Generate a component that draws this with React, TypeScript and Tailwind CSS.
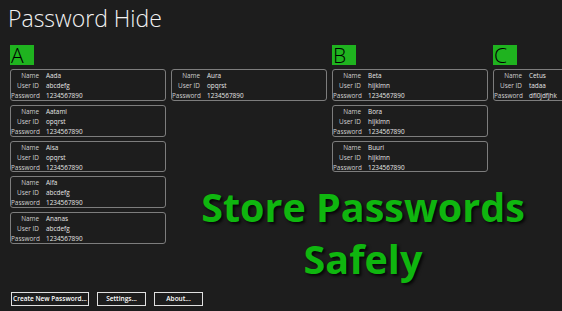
import React from 'react'

type Entry = { name: string; id: string; pw: string }

const groups: { letter: string; columns: Entry[][] }[] = [
  {
    letter: 'A',
    columns: [
      [
        { name: 'Aada', id: 'abcdefg', pw: '1234567890' },
        { name: 'Aatami', id: 'opqrst', pw: '1234567890' },
        { name: 'Aisa', id: 'opqrst', pw: '1234567890' },
        { name: 'Alfa', id: 'abcdefg', pw: '1234567890' },
        { name: 'Ananas', id: 'abcdefg', pw: '1234567890' },
      ],
      [{ name: 'Aura', id: 'opqrst', pw: '1234567890' }],
    ],
  },
  {
    letter: 'B',
    columns: [
      [
        { name: 'Beta', id: 'hijklmn', pw: '1234567890' },
        { name: 'Bora', id: 'hijklmn', pw: '1234567890' },
        { name: 'Buuri', id: 'hijklmn', pw: '1234567890' },
      ],
    ],
  },
  {
    letter: 'C',
    columns: [[{ name: 'Cetus', id: 'tadaa', pw: 'dfl0jdfjhk' }]],
  },
]

function Card({ e }: { e: Entry }) {
  return (
    <div className="w-[156px] h-[31.75px] shrink-0 rounded-[3px] border border-[#7d7d7d] pt-[1px] overflow-hidden">
      <div className="grid grid-cols-[28px_1fr] gap-x-[7px] text-[6.4px] leading-[10px] whitespace-nowrap">
        <span className="text-right text-[#d0d0d0]">Name</span>
        <span className="text-[#e6e6e6]">{e.name}</span>
        <span className="text-right text-[#d0d0d0]">User ID</span>
        <span className="text-[#e6e6e6]">{e.id}</span>
        <span className="text-right text-[#d0d0d0]">Password</span>
        <span className="text-[#e6e6e6]">{e.pw}</span>
      </div>
    </div>
  )
}

export default function App() {
  return (
    <div
      className="relative w-[562px] h-[311px] overflow-hidden bg-[#1d1d1d] text-white flex flex-col"
      style={{ fontFamily: '"Open Sans", "Noto Sans", sans-serif' }}
    >
      <h1 className="ml-[8px] mt-[3px] text-[23px] leading-[30px] font-light text-[#f2f2f2]">Password Hide</h1>

      <div className="mt-[12px] ml-[10px] flex gap-[5px]">
        {groups.map((g) => (
          <div key={g.letter} className="flex flex-col gap-[4px]">
            <div className="w-[24px] h-[20px] bg-[#1fb31f] text-black text-[21px] font-light leading-[20px] pl-[1px]">
              {g.letter}
            </div>
            <div className="flex gap-[5px]">
              {g.columns.map((col, i) => (
                <div key={i} className="flex flex-col gap-[4px]">
                  {col.map((e) => (
                    <Card key={e.name} e={e} />
                  ))}
                </div>
              ))}
            </div>
          </div>
        ))}
      </div>

      <div className="flex-1" />

      <div className="ml-[11px] mb-[5px] flex gap-[8px]">
        {['Create New Password...', 'Settings...', 'About...'].map((b, i) => (
          <button
            key={b}
            className={`h-[14px] border-[1.5px] border-[#e0e0e0] text-[6.5px] font-semibold text-white leading-none ${
              i === 0 ? 'w-[78px]' : 'w-[49px]'
            }`}
          >
            {b}
          </button>
        ))}
      </div>

      <div className="absolute left-[182px] top-[181px] w-[362px] text-center text-[39.5px] leading-[52px] font-bold text-[#0fb60f] [text-shadow:2px_2px_3px_rgba(0,0,0,0.8)]">
        Store Passwords
        <br />
        Safely
      </div>
    </div>
  )
}
